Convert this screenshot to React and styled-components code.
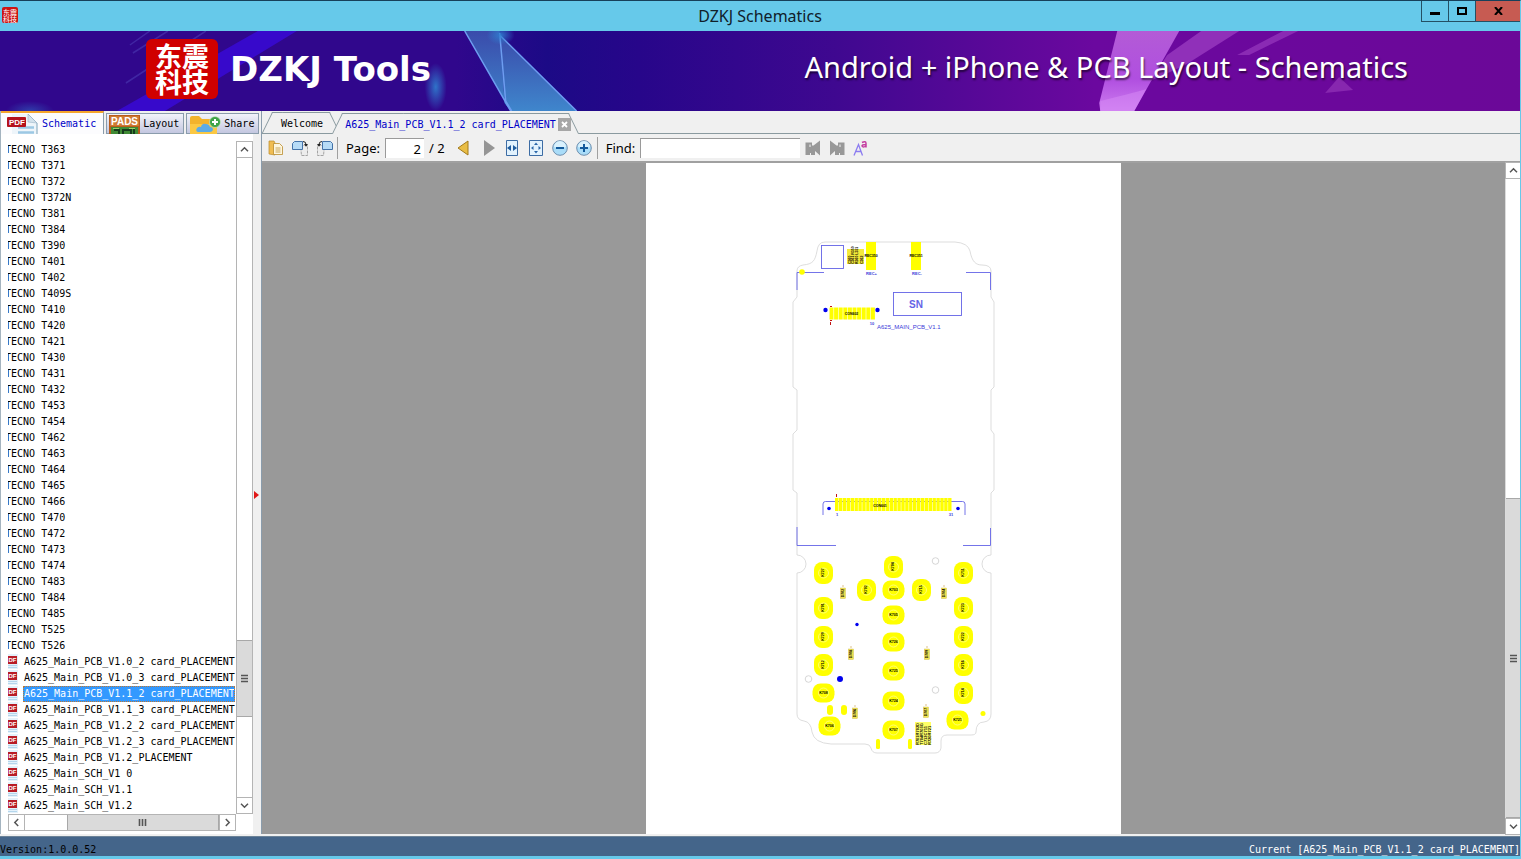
import React, { useState } from 'react';
import styled, { createGlobalStyle, css } from 'styled-components';

const MONO = '"DejaVu Sans Mono", "Liberation Mono", monospace';
const SANS = '"Noto Sans", "Open Sans", sans-serif';

const GlobalStyle = createGlobalStyle`
  * { box-sizing: border-box; }
  body { margin: 0; }
  button, input { font: inherit; color: inherit; margin: 0; }
`;

const Window = styled.div`
  display: flex;
  flex-direction: column;
  height: 100vh;
  overflow: hidden;
  background: #f0f0f0;
  border-top: 1px solid #17405a;
  border-right: 1px solid #66c9ea;
  border-bottom: 3px solid #66c9ea;
  font-family: ${MONO};
  font-size: 10px;
  line-height: 16px;
  color: #000;
`;

const TitleBar = styled.header`
  display: grid;
  grid-template-columns: 100px 1fr 100px;
  height: 30px;
  flex: none;
  background: #66c9ea;
  h1 {
    margin: 0;
    align-self: center;
    text-align: center;
    font: 16px/24px ${SANS};
    color: #10202a;
  }
`;

const AppIcon = styled.svg`
  width: 16px;
  height: 16px;
  margin: 6px 2px;
`;

const WindowButtons = styled.div`
  display: flex;
  justify-content: flex-end;
`;

const WindowButton = styled.button`
  display: flex;
  align-items: center;
  justify-content: center;
  width: ${p => (p.$close ? '45px' : '27px')};
  height: 21px;
  padding: 0;
  border: 1px solid #245064;
  border-top: 0;
  border-right: 0;
  background: ${p => (p.$close ? '#c75b52' : 'transparent')};
`;

const Banner = styled.div`
  position: relative;
  display: flex;
  align-items: center;
  height: 80px;
  flex: none;
  padding: 0 112px 4px 146px;
  color: #fff;
  font-family: ${SANS};
`;

const BannerArt = styled.svg`
  position: absolute;
  inset: 0;
  width: 100%;
  height: 100%;
`;

const Logo = styled.div`
  position: relative;
  display: grid;
  place-items: center;
  width: 72px;
  height: 60px;
  border-radius: 6px;
  background: #d00000;
  font: bold 27px/26px "Noto Sans CJK SC", sans-serif;
  text-align: center;
  span { display: block; }
`;

const Brand = styled.div`
  position: relative;
  margin-left: 12px;
  font: bold 34px/40px "DejaVu Sans", sans-serif;
`;

const Slogan = styled.div`
  position: relative;
  margin-left: auto;
  padding-bottom: 4px;
  font-size: 29px;
  line-height: 40px;
  white-space: nowrap;
  text-shadow: 1px 2px 2px rgba(0, 0, 0, .6);
`;

const Body = styled.div`
  display: grid;
  grid-template-columns: 261px minmax(0, 1fr);
  flex: 1;
  min-height: 0;
`;

const Sidebar = styled.aside`
  display: flex;
  flex-direction: column;
  min-height: 0;
  border-left: 1px solid #a4b4c0;
`;

const SideTabs = styled.div`
  display: flex;
  align-items: flex-end;
  gap: 2px;
  height: 23px;
  flex: none;
`;

const SideTab = styled.button`
  display: flex;
  align-items: center;
  gap: 3px;
  height: 21px;
  padding: 1px 4px 0 2px;
  border: 1px solid #8a9cac;
  background: linear-gradient(#f2f3fa, #c3c7e0);
  white-space: nowrap;
  svg { flex: none; }
  ${p => p.$active && css`
    height: 23px;
    padding: 1px 7px 0 6px;
    border-left: 0;
    border-bottom: 0;
    border-top: 2px solid #f5a52c;
    background: #fcfcfe;
    color: #0000c8;
  `}
`;

const SidePanel = styled.div`
  display: grid;
  grid-template-columns: minmax(0, 1fr) 8px;
  flex: 1;
  min-height: 0;
`;

const TreeArea = styled.div`
  display: grid;
  grid-template-columns: minmax(0, 1fr) 17px;
  grid-template-rows: minmax(0, 1fr) 17px;
  min-height: 0;
  padding: 7px 0 3px 7px;
  background: #fff;
`;

const Splitter = styled.button`
  display: flex;
  align-items: center;
  justify-content: center;
  padding: 22px 0 0;
  border: 0;
  background: #f0f0f0;
`;

const Tree = styled.ul`
  margin: 0;
  padding: 1px 0 0;
  overflow: hidden;
  list-style: none;
`;

const TreeItem = styled.li`
  height: 16px;
  margin-left: -4px;
`;

const TreeButton = styled.button`
  display: flex;
  align-items: center;
  gap: 5px;
  height: 16px;
  padding: 0;
  border: 0;
  background: none;
  white-space: nowrap;
  svg { flex: none; }
  span {
    padding-left: 1px;
    line-height: 16px;
    ${p => p.$selected && css`
      background: #3399ff;
      color: #fff;
      outline: 1px dotted #c07830;
      outline-offset: -1px;
    `}
  }
`;

const Bar = styled.div`
  display: flex;
  flex-direction: ${p => (p.$row ? 'row' : 'column')};
  min-height: 0;
  background: #fff;
  border: 1px solid #b4b4b4;
  ${p => p.$edge && css`border: 0; border-left: 1px solid #dcdcdc;`}
`;

const BarButton = styled.button`
  display: flex;
  align-items: center;
  justify-content: center;
  flex: none;
  width: 15px;
  height: 15px;
  padding: 0;
  border: 0;
  background: #fff;
  outline: 1px solid #b4b4b4;
`;

const Track = styled.div`
  flex: ${p => p.$size};
`;

const Thumb = styled.div`
  display: flex;
  flex: ${p => p.$size};
  align-items: center;
  justify-content: center;
  background: #dadada;
  border: 1px solid #a8a8a8;
  border-width: ${p => (p.$row ? '0 1px' : '1px 0')};
`;

const Viewer = styled.main`
  display: flex;
  flex-direction: column;
  min-width: 0;
  min-height: 0;
  border-left: 1px solid #8a9cac;
`;

const DocTabs = styled.div`
  display: flex;
  align-items: flex-end;
  height: 23px;
  flex: none;
  padding-left: 5px;
  border-bottom: 1px solid #8a9a9f;
`;

const DocTab = styled.div`
  position: relative;
  display: flex;
  align-items: center;
  gap: 2px;
  height: 21px;
  margin-right: 2px;
  margin-bottom: ${p => (p.$active ? '-1px' : '0')};
  padding: ${p => (p.$active ? '2px 4px 0 8px' : '2px 12px 0 14px')};
  color: ${p => (p.$active ? '#0000c8' : '#000')};
  &::before, &::after {
    content: '';
    position: absolute;
    top: 0;
    bottom: 0;
    border-top: 1px solid #8a9a9f;
    background: #f0f0f0;
  }
  &::before {
    left: 0;
    right: 30%;
    border-left: 1px solid #8a9a9f;
    transform: skewX(-26deg);
  }
  &::after {
    left: 30%;
    right: 0;
    border-right: 1px solid #8a9a9f;
    transform: skewX(26deg);
  }
`;

const DocTabName = styled.button`
  position: relative;
  z-index: 1;
  padding: 0;
  border: 0;
  background: none;
  white-space: nowrap;
`;

const CloseTab = styled.button`
  position: relative;
  z-index: 1;
  display: grid;
  place-items: center;
  width: 13px;
  height: 13px;
  padding: 0;
  border: 0;
  background: #a6a6a6;
`;

const Toolbar = styled.div`
  display: flex;
  align-items: center;
  gap: 8px;
  height: 29px;
  flex: none;
  padding: 1px 6px 0;
  border-bottom: 2px solid #a0a0a0;
  font: 13px/18px ${SANS};
`;

const ToolButton = styled.button`
  display: grid;
  place-items: center;
  width: 16px;
  height: 16px;
  padding: 0;
  border: 0;
  background: none;
`;

const ToolGroup = styled.div`
  display: flex;
  align-items: center;
  gap: ${p => p.$gap || '8px'};
`;

const PageNav = styled(ToolGroup)`
  padding-left: 3px;
`;

const Divider = styled.span`
  width: 1px;
  height: 22px;
  margin-left: -3px;
  background: #a0a0a0;
`;

const Field = styled.input`
  width: ${p => p.$w};
  height: 20px;
  padding: 0 3px;
  border: 0;
  border-top: 1px solid #9a9a9a;
  border-left: 1px solid #9a9a9a;
  background: #fff;
  text-align: ${p => (p.$number ? 'right' : 'left')};
`;

const Stage = styled.div`
  display: grid;
  grid-template-columns: minmax(0, 1fr) 15px;
  flex: 1;
  min-height: 0;
`;

const Canvas = styled.div`
  display: flex;
  justify-content: center;
  min-height: 0;
  background: #999;
`;

const Page = styled.div`
  width: 475px;
  overflow: hidden;
  background: #fff;
  svg { display: block; width: 475px; height: 671px; }
`;

const StatusBar = styled.footer`
  display: flex;
  align-items: flex-end;
  justify-content: space-between;
  height: 20px;
  flex: none;
  margin-top: 2px;
  background: #44658a;
  border-top: 1px solid #6b8297;
  line-height: 13px;
`;

const Light = styled.span`
  color: #fff;
`;

const models = [
  'T363', 'T371', 'T372', 'T372N', 'T381', 'T384', 'T390', 'T401', 'T402', 'T409S', 'T410',
  'T420', 'T421', 'T430', 'T431', 'T432', 'T453', 'T454', 'T462', 'T463', 'T464', 'T465',
  'T466', 'T470', 'T472', 'T473', 'T474', 'T483', 'T484', 'T485', 'T525', 'T526',
];

const files = [
  'A625_Main_PCB_V1.0_2 card_PLACEMENT',
  'A625_Main_PCB_V1.0_3 card_PLACEMENT',
  'A625_Main_PCB_V1.1_2 card_PLACEMENT',
  'A625_Main_PCB_V1.1_3 card_PLACEMENT',
  'A625_Main_PCB_V1.2_2 card_PLACEMENT',
  'A625_Main_PCB_V1.2_3 card_PLACEMENT',
  'A625_Main_PCB_V1.2_PLACEMENT',
  'A625_Main_SCH_V1 0',
  'A625_Main_SCH_V1.1',
  'A625_Main_SCH_V1.2',
];

// x, y, label, wide (1) or upright (0)
const keys = [
  [893, 567, 'K704', 0], [893, 590, 'K703', 1], [893, 615, 'K705', 1], [893, 642, 'K726', 1],
  [893, 671, 'K725', 1], [893, 701, 'K724', 1], [893, 730, 'K707', 1],
  [823, 573, 'K727', 0], [823, 608, 'K701', 0], [823, 637, 'K729', 0], [823, 665, 'K712', 0],
  [823, 693, 'K708', 1], [829, 726, 'K706', 1], [866, 590, 'K702', 0], [921, 590, 'K715', 0],
  [963, 573, 'K711', 0], [963, 608, 'K723', 0], [963, 637, 'K722', 0], [963, 665, 'K716', 0],
  [963, 693, 'K714', 0], [957, 720, 'K721', 1],
];

const diodes = [
  [843, 593, 'D702'], [944, 593, 'D704'], [851, 654, 'D708'],
  [927, 654, 'D709'], [855, 713, 'D706'], [926, 712, 'D707'],
];

function Chevron({ dir }) {
  const turn = { up: 0, right: 90, down: 180, left: 270 }[dir];
  return (
    <svg width="9" height="9" viewBox="0 0 9 9">
      <path d="M1 6.2 4.5 2.8 8 6.2" fill="none" stroke="#555" strokeWidth="1.5" transform={`rotate(${turn} 4.5 4.5)`} />
    </svg>
  );
}

function Grip({ row }) {
  return (
    <svg width="9" height="9" viewBox="0 0 9 9">
      <path d={row ? 'M1.5 1v7M4.5 1v7M7.5 1v7' : 'M1 1.5h7M1 4.5h7M1 7.5h7'} stroke="#555" strokeWidth="1.6" />
    </svg>
  );
}

function ScrollBar({ row, edge, parts }) {
  return (
    <Bar $row={row} $edge={edge}>
      <BarButton aria-label={row ? 'Scroll left' : 'Scroll up'}><Chevron dir={row ? 'left' : 'up'} /></BarButton>
      <Track $size={parts[0]} />
      <Thumb $row={row} $size={parts[1]}><Grip row={row} /></Thumb>
      <Track $size={parts[2]} />
      <BarButton aria-label={row ? 'Scroll right' : 'Scroll down'}><Chevron dir={row ? 'right' : 'down'} /></BarButton>
    </Bar>
  );
}

function FileIcon() {
  return (
    <svg width="14" height="16" viewBox="0 0 14 16">
      <path d="M3 0h11v15H3z" fill="#e4f1fa" />
      <path d="M4 11.500h9M4 13.500h9" stroke="#b4d6ec" />
      <rect x="0" y="2" width="13" height="8" fill="#b81c26" />
      <text x="4.500" y="8.200" fontSize="6" fontWeight="bold" fontFamily="Liberation Sans" fill="#fff">DF</text>
    </svg>
  );
}

function PdfIcon() {
  return (
    <svg width="32" height="20" viewBox="0 0 32 20">
      <path d="M5 0h16l9 9v11H5z" fill="#eef5fa" />
      <path d="M21 0l9 9v11" fill="none" stroke="#7da2b8" />
      <path d="M21 0v8l9 1z" fill="#d3e2ec" stroke="#9bb6c8" strokeWidth=".6" />
      <path d="M11 13.500h16M11 18.500h16" stroke="#9cc8e4" strokeWidth="2.400" />
      <rect x="0" y="3" width="19" height="10" rx="1" fill="#b5121c" />
      <text x="2" y="11" fontSize="8" fontFamily="Liberation Sans" fontWeight="bold" fill="#fff">PDF</text>
    </svg>
  );
}

function PadsIcon() {
  return (
    <svg width="31" height="19" viewBox="0 0 31 19">
      <rect width="31" height="19" fill="#b85c1c" />
      <rect x="1" y="1" width="29" height="10" fill="#cf7a32" />
      <text x="2" y="10" fontSize="10" fontWeight="bold" fontFamily="Liberation Sans" fill="#fff">PADS</text>
      <rect x="2" y="12" width="27" height="7" fill="#3f8a34" />
      <path d="M5 15h5v4M14 19v-4h8v4M25 14v5" fill="none" stroke="#173c1d" strokeWidth="2" />
      <path d="M4 13.500h6M20 13.500h6" stroke="#9bd06a" />
    </svg>
  );
}

function ShareIcon() {
  return (
    <svg width="32" height="19" viewBox="0 0 32 19">
      <path d="M1 3q0-2 2-2h7l3 3h13q2 0 2 2v13H1z" fill="#f2b32c" />
      <path d="M1 9h27v10H1z" fill="#fbc843" />
      <path d="M9 17q-3-1-1-4 2-2 4-1 1-4 5-3 3 0 4 3 3 0 3 3-1 2-3 2z" fill="#5cabe6" />
      <circle cx="26" cy="7" r="5.500" fill="#3fa447" stroke="#d9efd5" strokeWidth=".6" />
      <path d="M26 4v6M23 7h6" stroke="#fff" strokeWidth="2" />
    </svg>
  );
}

function RotateIcon({ left }) {
  return (
    <svg width="17" height="17" viewBox="0 0 17 17" transform={left ? 'scale(-1 1)' : undefined}>
      <path d="M8.500 5.500h7v10h-6z" fill="#ececec" stroke="#a4a4a4" strokeDasharray="3 1" />
      <path d="M.500 3.500l2-2h8v8h-10z" fill="#b7dbf6" stroke="#4472a8" />
      <path d="M11 1.500q3 0 3 3" fill="none" stroke="#222" />
      <path d="M12 4h4l-2 2.800z" fill="#222" />
    </svg>
  );
}

function ZoomIcon({ plus }) {
  return (
    <svg width="16" height="16" viewBox="0 0 16 16">
      <circle cx="8" cy="8" r="7.300" fill="#a9dcf8" stroke="#6f8fae" />
      <path d="M2 7a6 6 0 0 1 12 0q-6 2-12 0z" fill="#d9f1fd" />
      <path d={plus ? 'M4 8h8M8 4v8' : 'M4 8h8'} stroke="#125a9c" strokeWidth="2" />
    </svg>
  );
}

function FindIcon({ next }) {
  return (
    <svg width="16" height="16" viewBox="0 0 16 16" transform={next ? 'scale(-1 1)' : undefined}>
      <path d="M.500 2.500h6.500v3h1.500L15 .500v15L10 11v4H6v-2H5v2H.500z" fill="#989898" />
      <path d="M4 4.500h2v2.500H4z" fill="#c6c6c6" />
    </svg>
  );
}

function BrandMark() {
  return (
    <AppIcon viewBox="0 0 16 16">
      <rect width="16" height="16" rx="2" fill="#cc1414" />
      <g fill="#fff" fontFamily="Noto Sans CJK SC" fontSize="7">
        <text x="1" y="7.500">东震</text>
        <text x="1" y="14.500">科技</text>
      </g>
    </AppIcon>
  );
}

function BannerBackground() {
  return (
    <BannerArt viewBox="0 0 1521 80" preserveAspectRatio="none">
      <defs>
        <linearGradient id="base">
          <stop offset="0" stopColor="#30078c" />
          <stop offset=".3" stopColor="#30078c" />
          <stop offset=".36" stopColor="#1c0a86" />
          <stop offset=".42" stopColor="#27068a" />
          <stop offset=".55" stopColor="#3f0890" />
          <stop offset=".66" stopColor="#5c0899" />
          <stop offset=".72" stopColor="#6b089f" />
          <stop offset="1" stopColor="#6b0898" />
        </linearGradient>
        <linearGradient id="shard" x2="0" y2="1">
          <stop offset="0" stopColor="#3a4bab" />
          <stop offset="1" stopColor="#3f86cc" />
        </linearGradient>
        <linearGradient id="pink" x2="0" y2="1">
          <stop offset="0" stopColor="#b35bd6" />
          <stop offset=".6" stopColor="#b04fe0" />
          <stop offset="1" stopColor="#cd7bf0" />
        </linearGradient>
        <radialGradient id="glow">
          <stop offset="0" stopColor="#2f7fd0" stopOpacity=".9" />
          <stop offset="1" stopColor="#2f7fd0" stopOpacity="0" />
        </radialGradient>
      </defs>
      <rect width="1521" height="80" fill="url(#base)" />
      <path d="M258 0h39L165 80h-48z" fill="#3a0be0" opacity=".75" />
      <path d="M206 0 126 52M168 0l-35 22M150 0l-20 14" stroke="#5a56c8" strokeWidth="1.500" opacity=".4" />
      <ellipse cx="436" cy="56" rx="11" ry="24" fill="url(#glow)" />
      <ellipse cx="30" cy="80" rx="24" ry="10" fill="url(#glow)" opacity=".5" />
      <path d="M465 0h35l5 72 6 8z" fill="url(#shard)" />
      <path d="M500 4 577 80H511l-6-8z" fill="url(#shard)" />
      <path d="M465 0l46 80M500 4l77 76M500 2l6 68 6 10" fill="none" stroke="#6d9df0" strokeWidth="1.500" />
      <ellipse cx="501" cy="4" rx="14" ry="10" fill="url(#glow)" />
      <path d="M1118 0h62l-45 80h-34l-1-8z" fill="url(#pink)" />
      <path d="M1101 70q40-10 46-12l-12 22h-34z" fill="#d88bf5" opacity=".5" />
      <path d="M1202 0h38l-54 34-35 16 17-26z" fill="#a94bcc" opacity=".6" />
      <path d="M1284 0h15l-49 24h-12z" fill="#a94bcc" opacity=".5" />
      <path d="M1340 46l14 13-28 3z" fill="#9335b8" opacity=".7" />
    </BannerArt>
  );
}

function Pad({ x, y, label, wide }) {
  const w = wide ? 22 : 19;
  const h = wide ? 19 : 22;
  return (
    <g>
      <rect x={x - w / 2 + 0.5} y={y - h / 2} width={w} height={h} rx="8" fill="#ff0" />
      <circle cx={x + 0.5} cy={y} r="5" fill="none" stroke="#ffffa0" strokeWidth=".7" />
      <text x={x + 0.5} y={y + 1.3} fontSize="3.600" textAnchor="middle" fontWeight="bold" transform={wide ? undefined : `rotate(-90 ${x} ${y})`}>{label}</text>
    </g>
  );
}

function Board() {
  return (
    <svg viewBox="646 163 475 671" fontFamily="Liberation Sans">
      <path
        d="M825 242H955Q968 243 970 251C972 262 976 265 982 265Q991 265 991 271V297L994 302V387L991 390V430L994 434V490L991 493V555A9 9 0 0 0 991 573V714Q991 721 984 722Q976 722 976 732Q976 735 971 735H947Q941 735 941 741V748Q940 753 935 753H877Q872 753 871 748Q870 744 865 744H831Q814 743 812 732Q811 722 804 721Q797 720 797 714V573A9 9 0 0 0 797 555V493L793 490V434L797 430V390L793 387V302L797 297V271Q797 266 803 265C813 264 815 261 817 251Q818 242 825 242Z"
        fill="none"
        stroke="#d4d4d4"
        strokeWidth=".8"
      />
      <g fill="none" stroke="#6464e6" strokeWidth=".9">
        <path d="M824 272.500H797V290M966 272.500h24.500V290M797 527v18.500h39M990.500 528v17.500H963" />
        <rect x="821.500" y="245.500" width="22" height="23" />
        <rect x="893.500" y="292.500" width="68" height="23" />
        <path d="M823 515v-11q0-2.500 2.500-2.500h137q2.500 0 2.500 2.500v11" />
      </g>
      <rect x="866" y="242" width="10" height="28" fill="#ff0" />
      <rect x="911" y="242" width="10" height="28" fill="#ff0" />
      <circle cx="802" cy="272" r="2.800" fill="#ff0" />
      <path d="M829.500 313.500h46" stroke="#ff0" strokeWidth="12" strokeDasharray="4 .6" />
      <path d="M835 504.500h117" stroke="#ff0" strokeWidth="13" strokeDasharray="3.400 .5" />
      <path d="M847 249h17v15h-17z" fill="#f5ea3a" />
      <g fontSize="3.500" fontWeight="bold" textAnchor="middle">
        <text x="871" y="257">REC350</text>
        <text x="916" y="257">REC351</text>
        <text x="851.500" y="315">CON602</text>
        <text x="880" y="507">CON601</text>
      </g>
      <g fontSize="4" fill="#3a3ad8" fontWeight="bold" textAnchor="middle">
        <text x="871.500" y="275">REC+</text>
        <text x="917" y="275">REC-</text>
        <text x="872" y="325">10</text>
        <text x="951" y="516">31</text>
        <text x="837" y="516">1</text>
      </g>
      <g fontSize="3.500" fontWeight="bold">
        <text transform="translate(850.500 264) rotate(-90)">C360</text>
        <text transform="translate(854 264) rotate(-90)">C361 R350</text>
        <text transform="translate(858 264) rotate(-90)">R360 L351</text>
        <text transform="translate(862.500 264) rotate(-90)">C362</text>
      </g>
      <text x="909" y="307.500" fontSize="10" fontWeight="bold" fill="#6464e6">SN</text>
      <text x="877" y="328.500" fontSize="6" fill="#3a3ad8">A625_MAIN_PCB_V1.1</text>
      <path d="M830 306.500h2M830 320.500h2M830.500 322v3M836.500 494v3" stroke="#c01414" />
      <g fill="#00e">
        <circle cx="825.500" cy="310" r="2.200" />
        <circle cx="877.500" cy="310" r="2.200" />
        <circle cx="829" cy="508.500" r="1.800" />
        <circle cx="958" cy="508.500" r="1.800" />
        <circle cx="857" cy="624.500" r="1.700" />
        <circle cx="840" cy="679" r="3" />
      </g>
      <g fill="none" stroke="#ccc" strokeWidth=".8">
        <circle cx="935.500" cy="561" r="3.300" />
        <circle cx="935.500" cy="690" r="3.300" />
        <circle cx="808.500" cy="679" r="3.300" />
      </g>
      {keys.map(([x, y, label, wide]) => <Pad key={label} x={x} y={y} label={label} wide={wide} />)}
      {diodes.map(([x, y, label]) => (
        <g key={label}>
          <rect x={x - 2.5} y={y - 5} width="5" height="10.500" fill="#f5e650" stroke="#c8b440" strokeWidth=".4" />
          <path d={`M${x - 1} ${y - 7}h2`} stroke="#c8963c" strokeWidth=".6" />
          <text x={x} y={y + 1.3} fontSize="3.600" fontWeight="bold" textAnchor="middle" transform={`rotate(-90 ${x} ${y})`}>{label}</text>
        </g>
      ))}
      <g fill="#ff0">
        <rect x="827" y="705" width="6" height="10" rx="3" />
        <rect x="841" y="705" width="6" height="10" rx="3" />
        <circle cx="983" cy="713.500" r="2.500" />
        <rect x="876" y="739" width="4" height="10" rx="1.500" />
        <rect x="908" y="739" width="4" height="10" rx="1.500" />
        <path d="M915 722h16v23h-16z" opacity=".6" />
      </g>
      <g fontSize="4" fontWeight="bold">
        <text transform="translate(918.500 745) rotate(-90)">R701R702D</text>
        <text transform="translate(922.500 745) rotate(-90)">T704R703G</text>
        <text transform="translate(926.500 745) rotate(-90)">C712C711</text>
        <text transform="translate(930.500 745) rotate(-90)">R720R721</text>
      </g>
    </svg>
  );
}

function App() {
  const [selected, setSelected] = useState(files[2]);
  const [page, setPage] = useState('2');
  const [query, setQuery] = useState('');

  return (
    <Window>
      <GlobalStyle />
      <TitleBar>
        <BrandMark />
        <h1>DZKJ Schematics</h1>
        <WindowButtons>
          <WindowButton aria-label="Minimize">
            <svg width="10" height="10"><path d="M0 7.500h10" stroke="#000" strokeWidth="3" /></svg>
          </WindowButton>
          <WindowButton aria-label="Maximize">
            <svg width="10" height="8"><path d="M1 1h8v6H1z" fill="none" stroke="#000" strokeWidth="2" /></svg>
          </WindowButton>
          <WindowButton $close aria-label="Close">
            <svg width="9" height="8"><path d="M1 0l7 8M8 0L1 8" stroke="#000" strokeWidth="2" /></svg>
          </WindowButton>
        </WindowButtons>
      </TitleBar>

      <Banner>
        <BannerBackground />
        <Logo><div><span>东震</span><span>科技</span></div></Logo>
        <Brand>DZKJ Tools</Brand>
        <Slogan>Android + iPhone &amp; PCB Layout - Schematics</Slogan>
      </Banner>

      <Body>
        <Sidebar>
          <SideTabs>
            <SideTab $active><PdfIcon />Schematic</SideTab>
            <SideTab><PadsIcon />Layout</SideTab>
            <SideTab><ShareIcon />Share</SideTab>
          </SideTabs>
          <SidePanel>
            <TreeArea>
              <Tree>
                {models.map(model => (
                  <TreeItem key={model}>
                    <TreeButton><span>TECNO {model}</span></TreeButton>
                  </TreeItem>
                ))}
                {files.map(file => (
                  <TreeItem key={file}>
                    <TreeButton $selected={file === selected} onClick={() => setSelected(file)}>
                      <FileIcon /><span>{file}</span>
                    </TreeButton>
                  </TreeItem>
                ))}
              </Tree>
              <ScrollBar parts={[484, 75, 81]} />
              <ScrollBar row parts={[43, 151, 1]} />
            </TreeArea>
            <Splitter aria-label="Collapse panel">
              <svg width="6" height="8"><path d="M0 0l5 4-5 4z" fill="#e01818" /></svg>
            </Splitter>
          </SidePanel>
        </Sidebar>

        <Viewer>
          <DocTabs>
            <DocTab><DocTabName>Welcome</DocTabName></DocTab>
            <DocTab $active>
              <DocTabName>A625_Main_PCB_V1.1_2 card_PLACEMENT</DocTabName>
              <CloseTab aria-label="Close tab">
                <svg width="7" height="7"><path d="M1 1l5 5M6 1L1 6" stroke="#fff" strokeWidth="1.800" /></svg>
              </CloseTab>
            </DocTab>
          </DocTabs>
          <Toolbar>
            <ToolButton aria-label="Open">
              <svg width="16" height="16" viewBox="0 0 16 16">
                <path d="M1 1h5l1 2v12l-6-1z" fill="#f0bd52" stroke="#b98b2c" strokeWidth=".7" />
                <path d="M5.500 3.500h6l3 3v8h-9z" fill="#fdf6df" stroke="#b98b2c" strokeWidth=".8" />
                <path d="M7.500 8h5M7.500 10h5M7.500 12h5" stroke="#c9a658" />
              </svg>
            </ToolButton>
            <ToolButton aria-label="Rotate right"><RotateIcon /></ToolButton>
            <ToolButton aria-label="Rotate left"><RotateIcon left /></ToolButton>
            <Divider />
            <ToolGroup $gap="5px">
              <label htmlFor="page">Page:</label>
              <Field id="page" $w="39px" $number value={page} onChange={e => setPage(e.target.value)} />
              <span>/ 2</span>
            </ToolGroup>
            <PageNav>
              <ToolButton aria-label="Previous page">
                <svg width="16" height="16"><path d="M12 1v14L2 8z" fill="#e9bd45" stroke="#a27a1c" /></svg>
              </ToolButton>
              <ToolButton aria-label="Next page">
                <svg width="16" height="16"><path d="M4 0v16L15 8z" fill="#959595" /></svg>
              </ToolButton>
              <ToolButton aria-label="Fit width">
                <svg width="16" height="16">
                  <path d="M2.500 .500h11v15h-11z" fill="#e2f2fd" stroke="#3c6ca4" />
                  <path d="M3 8l4-3v6zM13 8L9 5v6z" fill="#1f5c9e" />
                </svg>
              </ToolButton>
              <ToolButton aria-label="Fit page">
                <svg width="16" height="16">
                  <path d="M1.500 .500h13v15h-13z" fill="#e2f2fd" stroke="#3c6ca4" />
                  <path d="M8 2.500l2 2.500H6zM8 13.500l2-2.500H6zM3 8l2.500-2v4zM13 8l-2.500-2v4z" fill="#2a66a8" />
                </svg>
              </ToolButton>
              <ToolButton aria-label="Zoom out"><ZoomIcon /></ToolButton>
              <ToolButton aria-label="Zoom in"><ZoomIcon plus /></ToolButton>
            </PageNav>
            <Divider />
            <ToolGroup $gap="5px">
              <label htmlFor="find">Find:</label>
              <Field id="find" $w="160px" value={query} onChange={e => setQuery(e.target.value)} />
              <ToolGroup>
                <ToolButton aria-label="Find previous"><FindIcon /></ToolButton>
                <ToolButton aria-label="Find next"><FindIcon next /></ToolButton>
                <ToolButton aria-label="Match case">
                  <svg width="16" height="16" viewBox="0 0 16 16" fill="none">
                    <path d="M1 15.500 5.500 4.500 9.500 15.500M2.500 11.500h6" stroke="#8c7cf0" strokeWidth="1.300" />
                    <path d="M9 2.500q4-2 4 1V7.500M13 4.500q-4 0-4 1.500 1 2 4 0" stroke="#c43ca0" strokeWidth="1.500" />
                  </svg>
                </ToolButton>
              </ToolGroup>
            </ToolGroup>
          </Toolbar>
          <Stage>
            <Canvas>
              <Page><Board /></Page>
            </Canvas>
            <ScrollBar edge parts={[322, 320, 1]} />
          </Stage>
        </Viewer>
      </Body>

      <StatusBar>
        <span>Version:1.0.0.52</span>
        <Light>Current [A625_Main_PCB_V1.1_2 card_PLACEMENT]</Light>
      </StatusBar>
    </Window>
  );
}

export default App;
